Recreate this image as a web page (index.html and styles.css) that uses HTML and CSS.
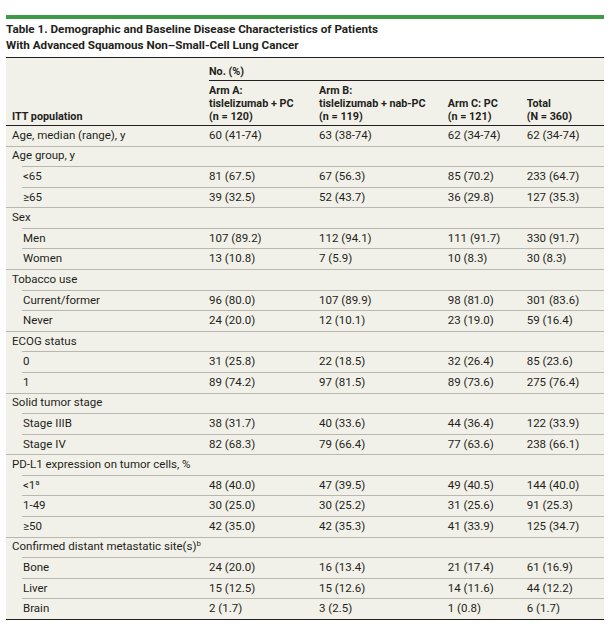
FILE: index.html
```html
<!DOCTYPE html>
<html lang="en">
<head>
<meta charset="utf-8">
<title>Table 1</title>
<link rel="stylesheet" href="styles.css">
</head>
<body>
<div class="page">
  <div class="rule"></div>
  <h1 class="title">Table 1. Demographic and Baseline Disease Characteristics of Patients<br>With Advanced Squamous Non–Small-Cell Lung Cancer</h1>
  <table class="data">
    <colgroup>
      <col class="c1"><col class="c2"><col class="c3"><col class="c4"><col class="c5">
    </colgroup>
    <thead>
      <tr class="head-top">
        <th class="pop" rowspan="2">ITT population</th>
        <th class="span" colspan="4"><div class="span-label">No. (%)</div></th>
      </tr>
      <tr class="head-arms">
        <th>Arm A:<br>tislelizumab + PC<br>(n = 120)</th>
        <th>Arm B:<br>tislelizumab + nab-PC<br>(n = 119)</th>
        <th>Arm C: PC<br>(n = 121)</th>
        <th>Total<br>(N = 360)</th>
      </tr>
    </thead>
    <tbody>
      <tr class="cat"><td>Age, median (range), y</td><td>60 (41-74)</td><td>63 (38-74)</td><td>62 (34-74)</td><td>62 (34-74)</td></tr>
      <tr class="cat"><td>Age group, y</td><td></td><td></td><td></td><td></td></tr>
      <tr class="sub"><td>&lt;65</td><td>81 (67.5)</td><td>67 (56.3)</td><td>85 (70.2)</td><td>233 (64.7)</td></tr>
      <tr class="sub"><td>≥65</td><td>39 (32.5)</td><td>52 (43.7)</td><td>36 (29.8)</td><td>127 (35.3)</td></tr>
      <tr class="cat"><td>Sex</td><td></td><td></td><td></td><td></td></tr>
      <tr class="sub"><td>Men</td><td>107 (89.2)</td><td>112 (94.1)</td><td>111 (91.7)</td><td>330 (91.7)</td></tr>
      <tr class="sub"><td>Women</td><td>13 (10.8)</td><td>7 (5.9)</td><td>10 (8.3)</td><td>30 (8.3)</td></tr>
      <tr class="cat"><td>Tobacco use</td><td></td><td></td><td></td><td></td></tr>
      <tr class="sub"><td>Current/former</td><td>96 (80.0)</td><td>107 (89.9)</td><td>98 (81.0)</td><td>301 (83.6)</td></tr>
      <tr class="sub"><td>Never</td><td>24 (20.0)</td><td>12 (10.1)</td><td>23 (19.0)</td><td>59 (16.4)</td></tr>
      <tr class="cat"><td>ECOG status</td><td></td><td></td><td></td><td></td></tr>
      <tr class="sub"><td>0</td><td>31 (25.8)</td><td>22 (18.5)</td><td>32 (26.4)</td><td>85 (23.6)</td></tr>
      <tr class="sub"><td>1</td><td>89 (74.2)</td><td>97 (81.5)</td><td>89 (73.6)</td><td>275 (76.4)</td></tr>
      <tr class="cat"><td>Solid tumor stage</td><td></td><td></td><td></td><td></td></tr>
      <tr class="sub"><td>Stage IIIB</td><td>38 (31.7)</td><td>40 (33.6)</td><td>44 (36.4)</td><td>122 (33.9)</td></tr>
      <tr class="sub"><td>Stage IV</td><td>82 (68.3)</td><td>79 (66.4)</td><td>77 (63.6)</td><td>238 (66.1)</td></tr>
      <tr class="cat"><td>PD-L1 expression on tumor cells, %</td><td></td><td></td><td></td><td></td></tr>
      <tr class="sub"><td>&lt;1<sup>a</sup></td><td>48 (40.0)</td><td>47 (39.5)</td><td>49 (40.5)</td><td>144 (40.0)</td></tr>
      <tr class="sub"><td>1-49</td><td>30 (25.0)</td><td>30 (25.2)</td><td>31 (25.6)</td><td>91 (25.3)</td></tr>
      <tr class="sub"><td>≥50</td><td>42 (35.0)</td><td>42 (35.3)</td><td>41 (33.9)</td><td>125 (34.7)</td></tr>
      <tr class="cat"><td>Confirmed distant metastatic site(s)<sup>b</sup></td><td></td><td></td><td></td><td></td></tr>
      <tr class="sub"><td>Bone</td><td>24 (20.0)</td><td>16 (13.4)</td><td>21 (17.4)</td><td>61 (16.9)</td></tr>
      <tr class="sub"><td>Liver</td><td>15 (12.5)</td><td>15 (12.6)</td><td>14 (11.6)</td><td>44 (12.2)</td></tr>
      <tr class="sub"><td>Brain</td><td>2 (1.7)</td><td>3 (2.5)</td><td>1 (0.8)</td><td>6 (1.7)</td></tr>
    </tbody>
  </table>
</div>
</body>
</html>
```

FILE: styles.css
```css
:root {
  --ink: #231f20;
  --paper: #f2f1e9;
  --grid: #b9b7ae;
  --green: #3d9a46;
}

html, body {
  margin: 0;
  background: #ffffff;
}

body {
  font-family: Roboto, "Liberation Sans", sans-serif;
  color: var(--ink);
}

.page {
  width: 598px;
  margin-left: 6px;
  padding-top: 15px;
}

.rule {
  height: 4px;
  background: var(--green);
}

.title {
  margin: 2px 0 4px;
  font-size: 11.7px;
  line-height: 16px;
  font-weight: 700;
}

.data {
  width: 598px;
  table-layout: fixed;
  border-collapse: separate;
  border-spacing: 0;
  background: var(--paper);
  border-top: 1px solid var(--ink);
  border-bottom: 1px solid var(--ink);
}

.c1 { width: 197px; }
.c2 { width: 110px; }
.c3 { width: 128.7px; }
.c4 { width: 79px; }
.c5 { width: 83.3px; }

.data th {
  font-size: 10.8px;
  line-height: 13px;
  font-weight: 700;
  text-align: left;
  vertical-align: bottom;
}

.head-top th.span {
  padding: 7px 0 0 6px;
}

.span-label {
  padding-bottom: 2px;
  border-bottom: 1px solid var(--ink);
}

.data th.pop {
  padding: 0 6px 2.2px;
  border-bottom: 1px solid var(--ink);
}

.head-arms th {
  padding: 2.8px 6px 2.2px;
  border-bottom: 1px solid var(--ink);
}

.data td {
  font-size: 11.5px;
  line-height: 14px;
  padding: 1.9px 6px 3.7px;
  text-align: left;
  vertical-align: top;
  white-space: nowrap;
  border-top: 1px solid var(--grid);
}

.data tbody tr:first-child td {
  border-top: none;
}

.sub td:first-child {
  padding-left: 17px;
  border-top: 1px solid transparent;
  background-image: linear-gradient(var(--grid), var(--grid));
  background-origin: border-box;
  background-position: 16px 0;
  background-size: calc(100% - 16px) 1px;
  background-repeat: no-repeat;
}

sup {
  font-size: 0.68em;
  line-height: 0;
  vertical-align: 0.45em;
}
```
